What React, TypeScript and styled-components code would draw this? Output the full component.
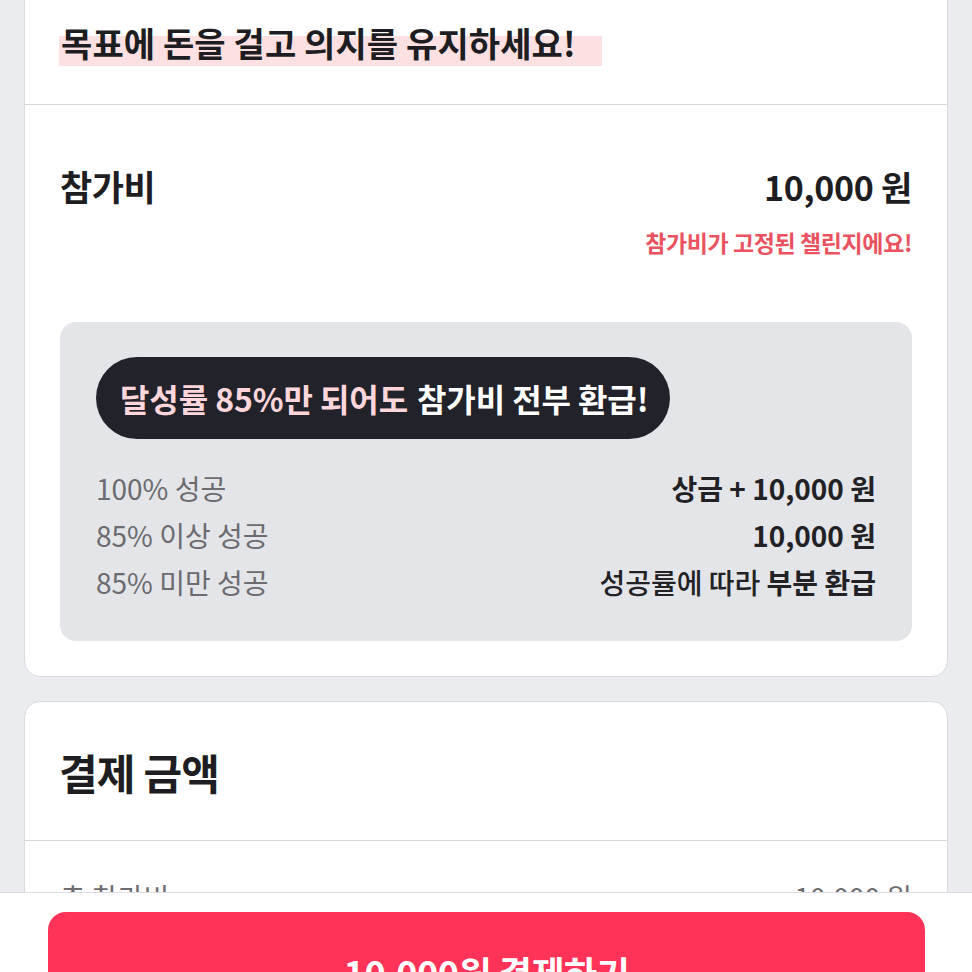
import React from 'react';
import styled, { createGlobalStyle } from 'styled-components';

const GlobalStyle = createGlobalStyle`
  html, body {
    margin: 0;
    padding: 0;
    background: #ebecef;
  }
  body {
    font-family: "Noto Sans CJK KR", "Noto Sans", sans-serif;
    color: #1d1d22;
    overflow: hidden;
  }
`;

const Page = styled.div`
  padding: 0 24px 120px;
  margin-top: -20px;
  display: flex;
  flex-direction: column;
  gap: 24px;
`;

const Card = styled.section`
  background: #fff;
  border: 1px solid #d9dade;
  border-radius: 16px;
`;

const CardHead = styled.div<{ $h: number }>`
  height: ${p => p.$h}px;
  display: flex;
  align-items: center;
  padding: 0 34px;
  border-bottom: 1px solid #d7d8dc;
  box-sizing: border-box;
`;

const Highlight = styled.h1`
  margin: 0;
  font-size: 34px;
  font-weight: 700;
  letter-spacing: 0.1px;
  line-height: 1;
  padding: 0 26px 6px 2px;
  background: linear-gradient(to bottom, transparent 26%, #fde0e2 26%, #fde0e2 100%);
  transform: translateY(3px);
`;

const CardTitle = styled.h2`
  margin: 0;
  font-size: 42px;
  font-weight: 700;
  letter-spacing: -0.8px;
`;

const CardBody = styled.div`
  padding: 57px 35px 35px;
`;

const FeeRow = styled.div`
  display: flex;
  justify-content: space-between;
  align-items: baseline;
  line-height: 48px;
`;

const FeeLabel = styled.span`
  font-size: 35px;
  font-weight: 600;
  letter-spacing: -0.5px;
`;

const FeeValue = styled.span`
  font-size: 34px;
  font-weight: 700;
  letter-spacing: -0.3px;
`;

const FixedNote = styled.div`
  text-align: right;
  margin-top: 16px;
  font-size: 23px;
  line-height: 30px;
  font-weight: 600;
  color: #e95360;
  letter-spacing: -0.4px;
`;

const RefundBox = styled.div`
  margin-top: 65px;
  background: #e4e5e8;
  border-radius: 16px;
  padding: 35px 36px 40px;
`;

const Badge = styled.div`
  display: inline-flex;
  align-items: center;
  height: 82px;
  padding: 0 22px 0 24px;
  border-radius: 41px;
  background: #22222a;
  color: #fff;
  font-size: 32px;
  font-weight: 700;
  letter-spacing: -0.1px;
`;

const Pink = styled.span`
  color: #ffd6dc;
  margin-right: 9px;
`;

const Rows = styled.div`
  margin-top: 31px;
  display: flex;
  flex-direction: column;
  gap: 10px;
`;

const Row = styled.div`
  display: flex;
  justify-content: space-between;
  font-size: 28px;
  line-height: 37px;
`;

const RowLabel = styled.span`
  color: #6b6b70;
`;

const RowValue = styled.span<{ $light?: boolean }>`
  color: #222226;
  font-weight: ${p => (p.$light ? 500 : 700)};
`;

const Strong = styled.span`
  font-weight: 700;
`;

const TotalRow = styled.div`
  display: flex;
  justify-content: space-between;
  padding: 38px 35px 40px;
  font-size: 28px;
  line-height: 37px;
  color: #6b6b70;
`;

const BottomBar = styled.div`
  position: fixed;
  left: 0;
  right: 0;
  bottom: 0;
  height: 80px;
  background: #fff;
  border-top: 1px solid #dcdde0;
  padding: 19px 47px 0 48px;
  box-sizing: border-box;
`;

const PayButton = styled.button`
  width: 100%;
  height: 120px;
  border: none;
  border-radius: 18px;
  background: #ff3358;
  color: #fff;
  font-family: inherit;
  font-size: 36px;
  font-weight: 700;
  letter-spacing: -0.5px;
  padding: 0;
`;

export default function App() {
  return (
    <>
      <GlobalStyle />
      <Page>
        <Card>
          <CardHead $h={124}>
            <Highlight>목표에 돈을 걸고 의지를 유지하세요!</Highlight>
          </CardHead>
          <CardBody>
            <FeeRow>
              <FeeLabel>참가비</FeeLabel>
              <FeeValue>10,000 원</FeeValue>
            </FeeRow>
            <FixedNote>참가비가 고정된 챌린지에요!</FixedNote>
            <RefundBox>
              <Badge>
                <Pink>달성률 85%만 되어도</Pink>참가비 전부 환급!
              </Badge>
              <Rows>
                <Row>
                  <RowLabel>100% 성공</RowLabel>
                  <RowValue>상금 + 10,000 원</RowValue>
                </Row>
                <Row>
                  <RowLabel>85% 이상 성공</RowLabel>
                  <RowValue>10,000 원</RowValue>
                </Row>
                <Row>
                  <RowLabel>85% 미만 성공</RowLabel>
                  <RowValue $light>
                    성공률에 따라 <Strong>부분 환급</Strong>
                  </RowValue>
                </Row>
              </Rows>
            </RefundBox>
          </CardBody>
        </Card>
        <Card>
          <CardHead $h={139}>
            <CardTitle>결제 금액</CardTitle>
          </CardHead>
          <TotalRow>
            <span>총 참가비</span>
            <span>10,000 원</span>
          </TotalRow>
        </Card>
      </Page>
      <BottomBar>
        <PayButton>10,000원 결제하기</PayButton>
      </BottomBar>
    </>
  );
}
